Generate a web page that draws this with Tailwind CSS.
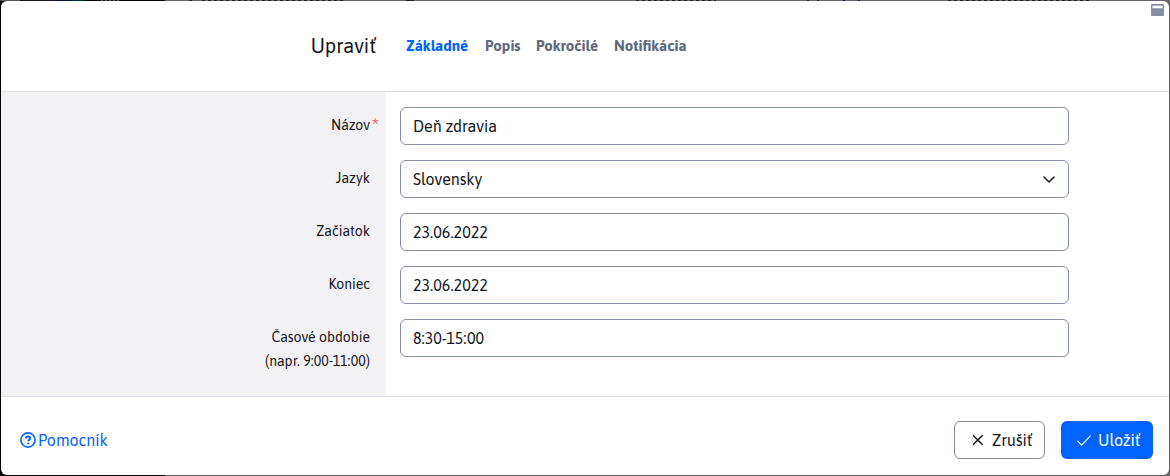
<!DOCTYPE html>
<html lang="sk">
<head>
<meta charset="utf-8">
<title>Upraviť</title>
<script src="https://cdn.jsdelivr.net/npm/@tailwindcss/browser@4"></script>
</head>
<body class="relative flex h-[476px] w-[1170px] overflow-hidden bg-[linear-gradient(90deg,#000_0_165px,#666_165px)] p-px font-['Asap','Noto_Sans',sans-serif] text-[16px] text-[#13151b] antialiased">
<!-- page content visible behind the dialog's top edge -->
<div class="absolute left-0 top-0 h-px w-[1170px] overflow-hidden">
  <div class="flex h-px *:shrink-0">
    <i class="w-5 bg-[#555]"></i><i class="w-9 bg-[#141414]"></i><i class="w-4 bg-[#001045]"></i><i class="w-3 bg-[#003428]"></i><i class="w-[17px] bg-black"></i><i class="w-[20px] bg-[repeating-linear-gradient(90deg,#555_0_2px,#111_2px_4px)]"></i><i class="w-[44px] bg-black"></i><i class="w-[24px] bg-[#666]"></i><i class="w-[3px] bg-[#222]"></i><i class="w-[10px] bg-[#666]"></i><i class="w-[141px] bg-[repeating-linear-gradient(90deg,#222_0_3px,#666_3px_6px)]"></i><i class="w-[63px] bg-[#666]"></i><i class="w-2 bg-[#222]"></i><i class="w-[222px] bg-[#666]"></i><i class="w-[80px] bg-[repeating-linear-gradient(90deg,#222_0_3px,#666_3px_6px)]"></i><i class="w-[91px] bg-[#666]"></i><i class="w-[2px] bg-[#222]"></i><i class="w-[8px] bg-[#666]"></i><i class="w-[2px] bg-[#222]"></i><i class="w-[24px] bg-[#666]"></i><i class="w-[2px] bg-[#00106a]"></i><i class="w-[13px] bg-[#666]"></i><i class="w-[2px] bg-[#00106a]"></i><i class="w-[88px] bg-[#666]"></i><i class="w-[144px] bg-[repeating-linear-gradient(90deg,#222_0_3px,#666_3px_6px)]"></i><i class="w-[100px] bg-[#666]"></i>
  </div>
</div>
<main class="relative flex h-[474px] w-[1168px] flex-col overflow-hidden rounded-[6px] bg-white">
  <header class="flex h-[91px] shrink-0 items-center border-b border-[#dfe0e2]">
    <h1 class="w-[375px] whitespace-nowrap text-right text-[20px] leading-6">Upraviť</h1>
    <nav class="ml-[30px] flex gap-4 whitespace-nowrap text-[15px] font-bold leading-6 text-[#636a7d]">
      <a class="w-[63px] text-[#0063fb]">Základné</a><a class="w-[35px]">Popis</a><a class="w-[62px]">Pokročilé</a><a class="w-[72px]">Notifikácia</a>
    </nav>
    <svg class="absolute right-[5px] top-[3px] h-3 w-[13px]" viewBox="0 0 13 12"><rect width="13" height="12" rx="1" fill="#868ea5"/><path d="M1.500 1.700h10v2.600h-10z" fill="#fff"/></svg>
  </header>
  <section class="flex h-[304px] shrink-0">
    <div class="flex w-[384px] flex-col items-end bg-[#f2f2f4] pr-[15px] pt-[21px] text-[14px] leading-6">
      <label class="relative h-[53px]">Názov<b class="absolute -right-[9px] top-px text-[20px] font-normal text-[#ff4b58]">*</b></label>
      <label class="h-[53px]">Jazyk</label>
      <label class="h-[53px]">Začiatok</label>
      <label class="h-[53px]">Koniec</label>
      <label class="text-right">Časové obdobie<br>(napr. 9:00-11:00)</label>
    </div>
    <div class="flex w-[699px] flex-col gap-[15px] px-[15px] pt-[15px] leading-9">
      <div class="h-[38px] rounded-[6px] border border-[#868ea5] px-3">Deň zdravia</div>
      <div class="flex h-[38px] items-center justify-between rounded-[6px] border border-[#868ea5] pl-3 pr-[13px]"><span>Slovensky</span><svg class="h-[7px] w-3" viewBox="0 0 12 7" fill="none" stroke="#212529" stroke-width="1.6" stroke-linecap="round" stroke-linejoin="round"><path d="m1 1 5 5 5-5"/></svg></div>
      <div class="h-[38px] rounded-[6px] border border-[#868ea5] px-3">23.06.2022</div>
      <div class="h-[38px] rounded-[6px] border border-[#868ea5] px-3">23.06.2022</div>
      <div class="h-[38px] rounded-[6px] border border-[#868ea5] px-3">8:30-15:00</div>
    </div>
  </section>
  <footer class="flex h-[79px] items-center border-t border-[#dcdee8] pl-[19px] pr-4 pt-[8px]">
    <a class="flex items-center gap-[2px] text-[#0063fb]"><svg class="size-4" viewBox="0 0 16 16" fill="none" stroke="currentColor" stroke-width="1.6"><circle cx="8" cy="8" r="7.1"/><path d="M5.8 6.3C6 5 6.8 4.5 8 4.5c1.4 0 2.2.8 2.2 1.8C10.2 7.7 8.2 7.6 8.2 9.3" stroke-width="1.9"/><circle cx="8.1" cy="11.5" r="1.1" fill="currentColor" stroke="none"/></svg>Pomocník</a>
    <button class="ml-auto flex h-[38px] w-[91px] items-center rounded-[6px] border border-[#868ea5] pl-[17px]"><svg class="mr-[8px] h-3 w-3" viewBox="0 0 12 12" fill="none" stroke="#13151b" stroke-width="1.5"><path d="m1 1.2 9.6 9.6m0-9.6L1 10.8"/></svg>Zrušiť</button>
    <button class="ml-4 flex h-[38px] w-[92px] items-center rounded-[6px] bg-[#0063fb] pl-4 text-white"><svg class="mr-[7px] h-[11px] w-[14px]" viewBox="0 0 14 11" fill="none" stroke="currentColor" stroke-width="1.2" stroke-linecap="round" stroke-linejoin="round"><path d="m.7 6.2 4 4L13.3.8"/></svg>Uložiť</button>
  </footer>
</main>
</body>
</html>
